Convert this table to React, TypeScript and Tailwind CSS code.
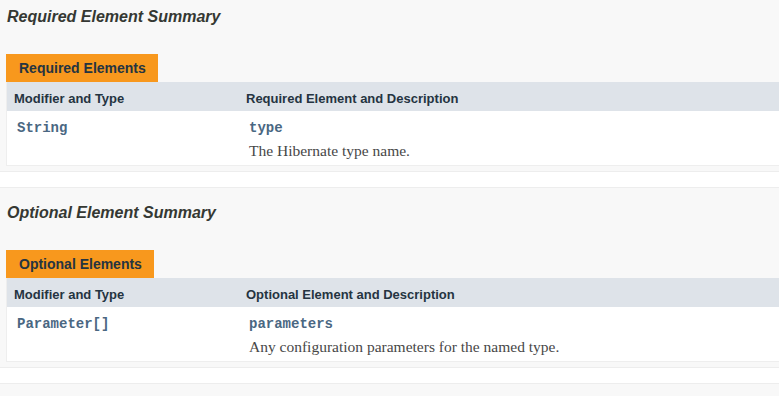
import React from "react";

type Row = { type: string; name: string; desc: string };

function Section(props: {
  title: string;
  caption: string;
  colTitle: string;
  row: Row;
}) {
  const { title, caption, colTitle, row } = props;
  return (
    <div className="border border-[#ededed] bg-[#f8f8f8] pl-[10px] pr-[20px] pb-[5px]">
      <h3 className="mt-[14px] mb-[26px] text-[16px] leading-[22px] font-bold italic text-[#353833] pl-[1px]">
        {title}
      </h3>
      <div className="flex">
        <div className="h-[28px] bg-[#f8981d] pl-[13px] pr-[12px] pt-[4px] text-[14px] leading-[20px] font-bold text-[#253441] whitespace-nowrap">
          {caption}
        </div>
      </div>
      <div className="border-l border-r border-b border-[#eeeeee]">
        <div className="flex h-[29px] bg-[#dee3e9] text-[13px] leading-[18px] font-bold text-[#253441]">
          <div className="w-[232px] shrink-0 pl-[7px] pt-[8px]">Modifier and Type</div>
          <div className="pl-[7px] pt-[8px]">{colTitle}</div>
        </div>
        <div className="flex h-[54px] bg-white">
          <div className="w-[232px] shrink-0 pl-[10px] pt-[8px] font-['Liberation_Mono',monospace] font-bold text-[14px] leading-[19px] text-[#4a6782]">
            {row.type}
          </div>
          <div className="pl-[10px] pt-[8px]">
            <div className="font-['Liberation_Mono',monospace] font-bold text-[14px] leading-[19px] text-[#4a6782]">
              {row.name}
            </div>
            <div className="mt-[3px] font-['Liberation_Serif',serif] text-[15.5px] leading-[19px] text-[#474747]">
              {row.desc}
            </div>
          </div>
        </div>
      </div>
    </div>
  );
}

export default function App() {
  return (
    <div className="w-[779px] h-[396px] overflow-hidden bg-white font-['Liberation_Sans',Arial,sans-serif]">
      <div className="-mt-[9px] -ml-[5px] w-[830px] flex flex-col gap-[15px]">
        <Section
          title="Required Element Summary"
          caption="Required Elements"
          colTitle="Required Element and Description"
          row={{ type: "String", name: "type", desc: "The Hibernate type name." }}
        />
        <Section
          title="Optional Element Summary"
          caption="Optional Elements"
          colTitle="Optional Element and Description"
          row={{
            type: "Parameter[]",
            name: "parameters",
            desc: "Any configuration parameters for the named type.",
          }}
        />
        <div className="h-[100px] border border-[#ededed] bg-[#f8f8f8]" />
      </div>
    </div>
  );
}
